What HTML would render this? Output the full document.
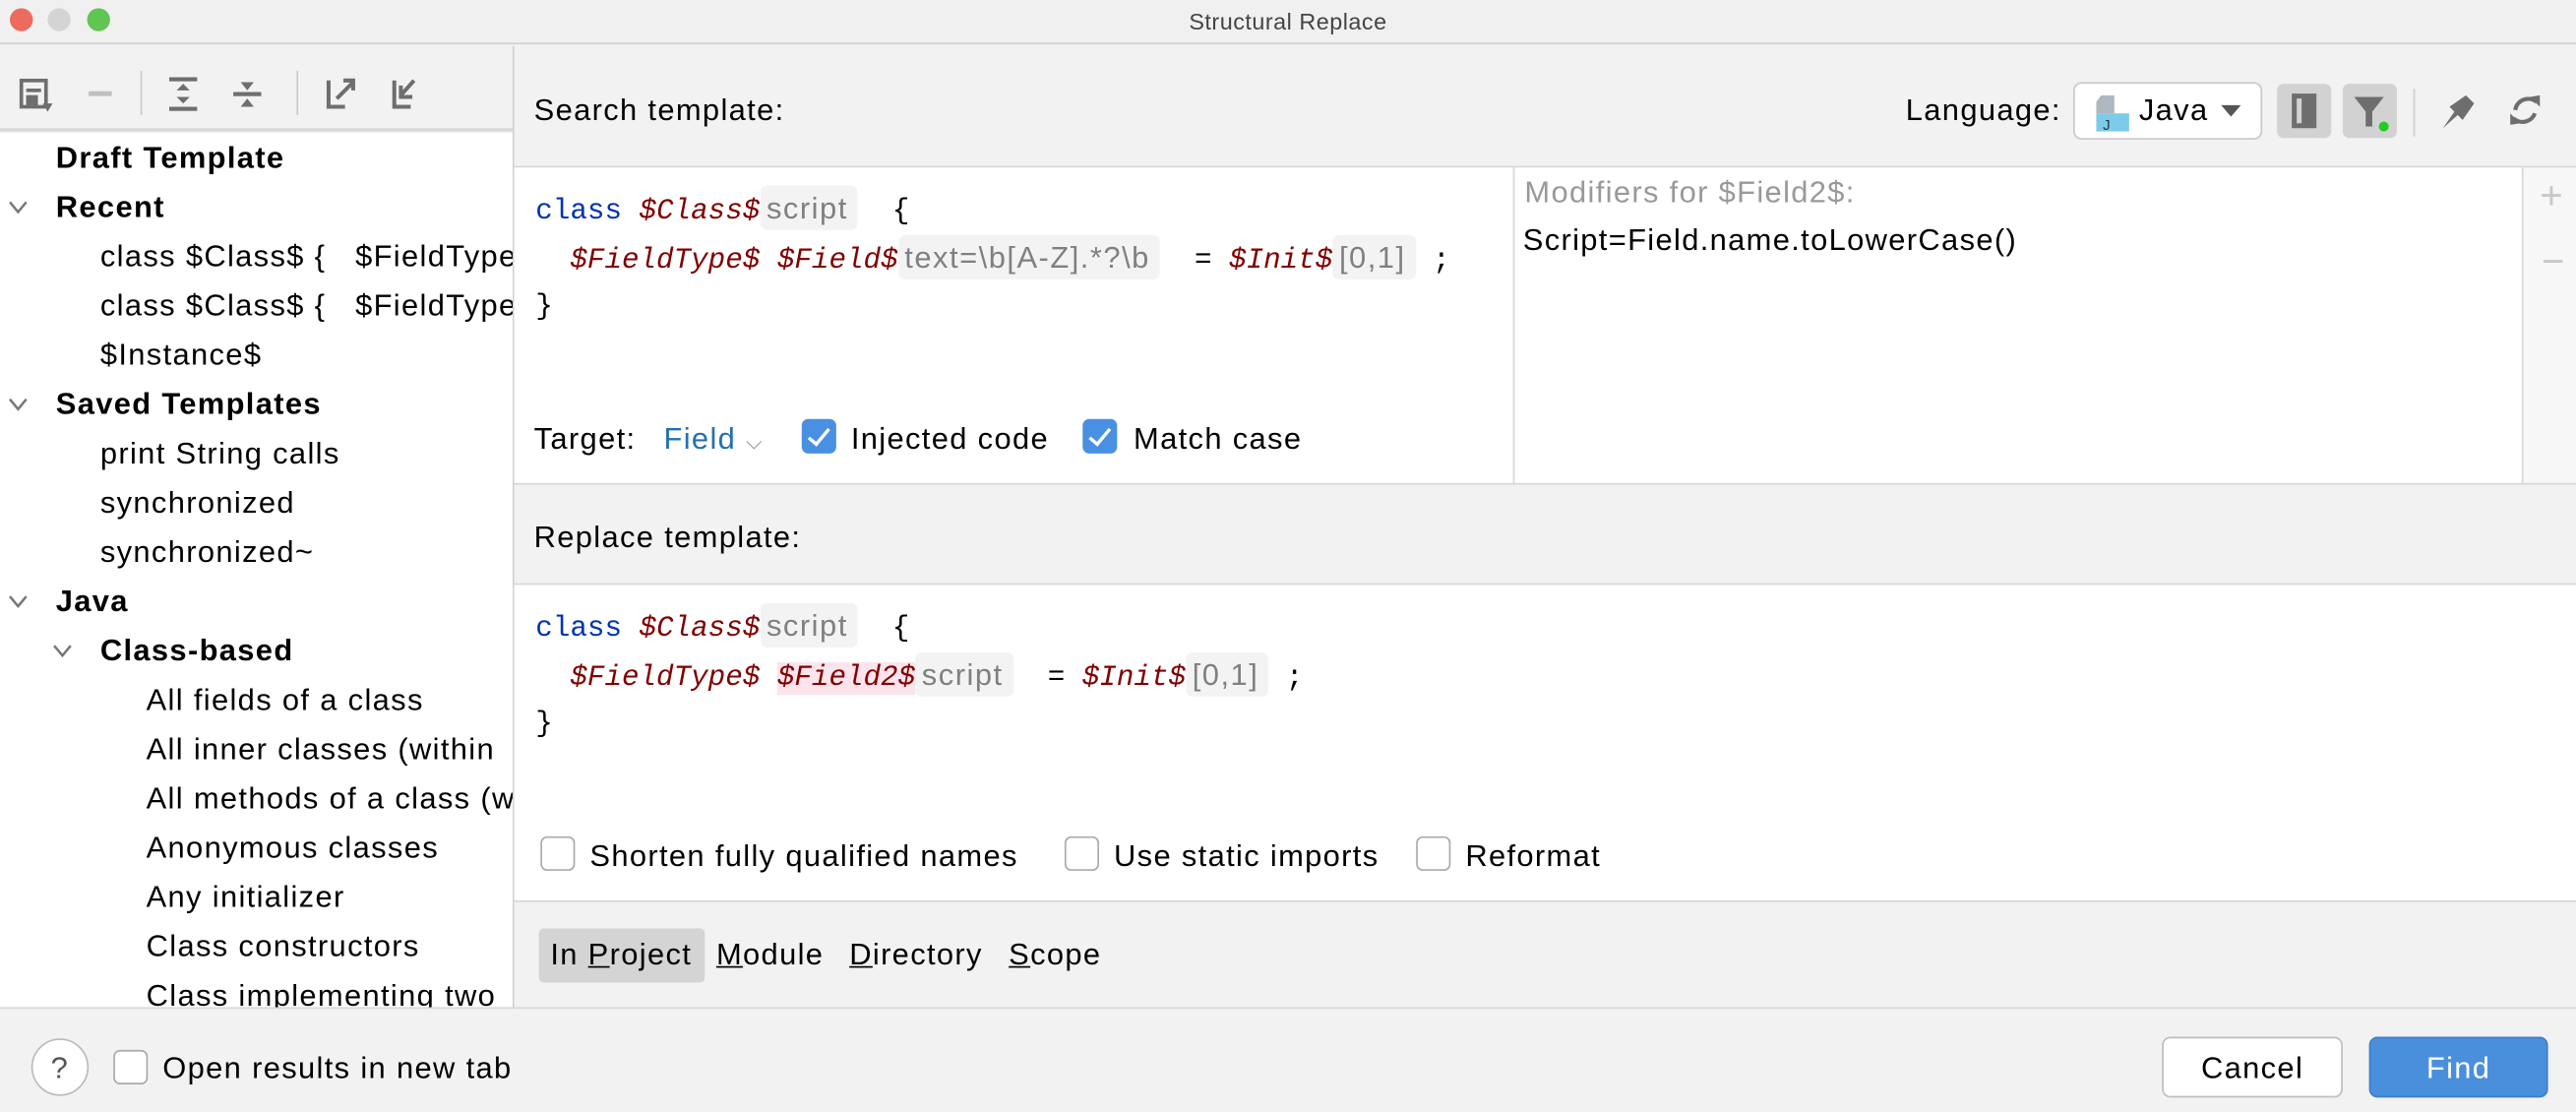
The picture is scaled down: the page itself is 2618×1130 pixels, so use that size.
<!DOCTYPE html>
<html><head><meta charset="utf-8"><style>
*{margin:0;padding:0;box-sizing:border-box}
html,body{width:2618px;height:1130px;overflow:hidden;background:#f2f2f2}
#w{position:absolute;left:0;top:0;width:1568px;height:677px;transform:scale(1.66964);transform-origin:0 0;font-family:"Liberation Sans",sans-serif;font-size:18.5px;letter-spacing:0.8px;color:#000;background:#f2f2f2}
.a{position:absolute}
.t{position:absolute;white-space:nowrap;line-height:20px}
.m{font-family:"Liberation Mono",monospace;font-size:17.5px;letter-spacing:0}
.kw{color:#0033b3}.var{color:#800000;font-style:italic}
.tag{background:#f3f3f3;color:#808080;border-radius:4px;padding:3px 6px 3px 4px;font-family:"Liberation Sans",sans-serif;font-size:18.5px;letter-spacing:0.9px}
.cb{position:absolute;width:21px;height:21px;border:1px solid #aaa;border-radius:4px;background:#fff}
.cbc{position:absolute;width:21px;height:21px;border-radius:4px;background:#4a90e2}
.cbc:after{content:"";position:absolute;left:7px;top:3px;width:5px;height:11px;border:solid #fff;border-width:0 2.5px 2.5px 0;transform:rotate(40deg)}
</style></head><body><div id="w">
<div class="a" style="left:0;top:0;width:1568px;height:27px;background:#f0f0f0;border-bottom:1px solid #d0d0d0"></div>
<div class="a" style="left:6px;top:5px;width:14px;height:14px;border-radius:7px;background:#ed6a5e"></div>
<div class="a" style="left:29px;top:5px;width:14px;height:14px;border-radius:7px;background:#d4d4d4"></div>
<div class="a" style="left:53px;top:5px;width:14px;height:14px;border-radius:7px;background:#61c554"></div>
<div class="t" style="left:0;width:1568px;text-align:center;top:3px;font-size:14px;letter-spacing:0.3px;color:#444">Structural Replace</div>
<div class="a" style="left:0;top:28px;width:312px;height:52px;background:#f2f2f2;border-bottom:2px solid #d8d8d8"></div>
<svg class="a" style="left:0;top:28px" width="312" height="52">
<g fill="none" stroke="#6e6e6e" stroke-width="2.2">
<rect x="13" y="21" width="15" height="16"/><rect x="17" y="31" width="5" height="4" fill="#6e6e6e"/>
<line x1="16" y1="27" x2="25" y2="27"/>
</g><path d="M26 35 l6 0 l-3 5z" fill="#6e6e6e"/>
<line x1="54" y1="29" x2="68" y2="29" stroke="#c0c0c0" stroke-width="3"/>
<line x1="86" y1="15" x2="86" y2="42" stroke="#ccc"/>
<line x1="181" y1="15" x2="181" y2="42" stroke="#ccc"/>
<g fill="#6e6e6e"><rect x="103" y="19" width="17" height="2.5"/><rect x="103" y="37" width="17" height="2.5"/>
<path d="M111.5 23 l4 4 h-8z M111.5 35 l4 -4 h-8z"/>
<rect x="142" y="28" width="17" height="2.5"/><path d="M150.5 27 l4 -5 h-8z M150.5 32 l4 5 h-8z"/></g>
<g fill="none" stroke="#6e6e6e" stroke-width="2.4"><path d="M200 21 v16 h10 M205 32 l10 -10 M209 21 h6 v6"/>
<path d="M240 21 v16 h10 M252 21 l-8 9 M244 24 v7 h7"/></g>
</svg>
<div class="a" style="left:312px;top:28px;width:1px;height:585px;background:#d0d0d0"></div>
<div class="a" style="left:0;top:81px;width:312px;height:532px;background:#fff;overflow:hidden">
<svg class="a" style="left:0;top:0" width="60" height="340"><g fill="none" stroke="#777" stroke-width="1.5">
<path d="M6 42 l5 6 l5 -6"/><path d="M6 162 l5 6 l5 -6"/><path d="M6 282 l5 6 l5 -6"/><path d="M33 312 l5 6 l5 -6"/></g></svg>
<div style="position:absolute;left:0;top:0px;line-height:30px;white-space:nowrap">
<div style="padding-left:34px;font-weight:bold">Draft Template</div>
<div style="padding-left:34px;font-weight:bold">Recent</div>
<div style="padding-left:61px">class $Class$ {&nbsp;&nbsp; $FieldType$</div>
<div style="padding-left:61px">class $Class$ {&nbsp;&nbsp; $FieldType$</div>
<div style="padding-left:61px">$Instance$</div>
<div style="padding-left:34px;font-weight:bold">Saved Templates</div>
<div style="padding-left:61px">print String calls</div>
<div style="padding-left:61px">synchronized</div>
<div style="padding-left:61px">synchronized~</div>
<div style="padding-left:34px;font-weight:bold">Java</div>
<div style="padding-left:61px;font-weight:bold">Class-based</div>
<div style="padding-left:89px">All fields of a class</div>
<div style="padding-left:89px">All inner classes (within</div>
<div style="padding-left:89px">All methods of a class (w</div>
<div style="padding-left:89px">Anonymous classes</div>
<div style="padding-left:89px">Any initializer</div>
<div style="padding-left:89px">Class constructors</div>
<div style="padding-left:89px">Class implementing two</div>
</div></div>
<div class="t" style="left:325px;top:57px">Search template:</div>
<div class="t" style="left:1160px;top:57px">Language:</div>
<div class="a" style="left:1262px;top:50px;width:115px;height:35px;background:#fff;border:1px solid #c8c8c8;border-radius:5px"></div>
<svg class="a" style="left:1272px;top:56px" width="100" height="26"><path d="M7 2 h8 v11 h-11 v-7z" fill="#b0b8bf"/><rect x="4" y="13" width="20" height="11" fill="#7ccbea"/><text x="8" y="23" font-size="9" font-family="Liberation Sans" fill="#333">J</text>
<path d="M80 8 h12 l-6 7z" fill="#555"/></svg>
<div class="t" style="left:1302px;top:57px">Java</div>
<div class="a" style="left:1386px;top:51px;width:33px;height:33px;background:#d2d2d2;border-radius:4px"></div>
<div class="a" style="left:1395px;top:57px;width:15px;height:21px;border:3px solid #6e6e6e;border-right-width:9px"></div>
<div class="a" style="left:1426px;top:51px;width:33px;height:33px;background:#d2d2d2;border-radius:4px"></div>
<svg class="a" style="left:1426px;top:51px" width="33" height="33"><path d="M7 8 h18 l-7 9 v9 h-4 v-9z" fill="#6e6e6e"/><circle cx="25" cy="26" r="3" fill="#22cc22"/></svg>
<div class="a" style="left:1469px;top:54px;width:1px;height:29px;background:#ccc"></div>
<svg class="a" style="left:1480px;top:53px" width="80" height="30"><path d="M7 25 l7 -10 l-3 -3 l10 -7 l5 5 l-7 10 l-3 -3z" fill="#6e6e6e"/>
<path d="M64 9 a8 8 0 0 0 -13 5 M50 19 a8 8 0 0 0 13 -3" fill="none" stroke="#6e6e6e" stroke-width="2.5"/><path d="M60 6 l6 -1 l0 7z M54 22 l-6 1 l0 -7z" fill="#6e6e6e"/></svg>
<div class="a" style="left:313px;top:101px;width:1255px;height:1px;background:#d6d6d6"></div>
<div class="a" style="left:313px;top:102px;width:608px;height:192px;background:#fff"></div>
<div class="a" style="left:921px;top:102px;width:1px;height:192px;background:#d6d6d6"></div>
<div class="a" style="left:922px;top:102px;width:613px;height:192px;background:#fff"></div>
<div class="a" style="left:1535px;top:102px;width:1px;height:192px;background:#d6d6d6"></div>
<div class="a" style="left:1536px;top:102px;width:32px;height:192px;background:#f7f7f7"></div>
<div class="t" style="left:1546px;top:110px;font-size:24px;color:#c8c8c8">+</div>
<div class="t" style="left:1547px;top:150px;font-size:24px;color:#c8c8c8">−</div>
<div class="t" style="left:928px;top:107px;color:#999">Modifiers for $Field2$:</div>
<div class="t" style="left:927px;top:136px">Script=Field.name.toLowerCase()</div>
<div class="t m" style="left:326px;top:117px"><span class="kw">class</span> <span class="var">$Class$</span><span class="tag">script</span> &nbsp;{</div>
<div class="t m" style="left:326px;top:147px">&nbsp;&nbsp;<span class="var">$FieldType$</span> <span class="var">$Field$</span><span class="tag">text=\b[A-Z].*?\b</span> &nbsp;= <span class="var">$Init$</span><span class="tag">[0,1]</span> ;</div>
<div class="t m" style="left:326px;top:177px">}</div>
<div class="t" style="left:325px;top:257px">Target:</div>
<div class="t" style="left:404px;top:257px;color:#2470b3">Field <span style="color:#888;font-size:13px">⌵</span></div>
<div class="cbc" style="left:488px;top:255px"></div>
<div class="t" style="left:518px;top:257px">Injected code</div>
<div class="cbc" style="left:659px;top:255px"></div>
<div class="t" style="left:690px;top:257px">Match case</div>
<div class="a" style="left:313px;top:294px;width:1255px;height:1px;background:#d6d6d6"></div>
<div class="t" style="left:325px;top:317px">Replace template:</div>
<div class="a" style="left:313px;top:355px;width:1255px;height:1px;background:#d6d6d6"></div>
<div class="a" style="left:313px;top:356px;width:1255px;height:192px;background:#fff"></div>
<div class="t m" style="left:326px;top:371px"><span class="kw">class</span> <span class="var">$Class$</span><span class="tag">script</span> &nbsp;{</div>
<div class="t m" style="left:326px;top:401px">&nbsp;&nbsp;<span class="var">$FieldType$</span> <span class="var" style="background:#fce4ec">$Field2$</span><span class="tag">script</span> &nbsp;= <span class="var">$Init$</span><span class="tag">[0,1]</span> ;</div>
<div class="t m" style="left:326px;top:431px">}</div>
<div class="cb" style="left:329px;top:509px"></div><div class="t" style="left:359px;top:511px">Shorten fully qualified names</div>
<div class="cb" style="left:648px;top:509px"></div><div class="t" style="left:678px;top:511px">Use static imports</div>
<div class="cb" style="left:862px;top:509px"></div><div class="t" style="left:892px;top:511px">Reformat</div>
<div class="a" style="left:313px;top:548px;width:1255px;height:1px;background:#d6d6d6"></div>
<div class="a" style="left:328px;top:565px;width:101px;height:33px;background:#d4d4d4;border-radius:3px"></div>
<div class="t" style="left:335px;top:571px">In <u>P</u>roject</div>
<div class="t" style="left:436px;top:571px"><u>M</u>odule</div>
<div class="t" style="left:517px;top:571px"><u>D</u>irectory</div>
<div class="t" style="left:614px;top:571px"><u>S</u>cope</div>
<div class="a" style="left:0;top:613px;width:1568px;height:1px;background:#d6d6d6"></div>
<div class="a" style="left:19px;top:632px;width:35px;height:35px;border-radius:18px;border:1px solid #bbb;background:#fff"></div>
<div class="t" style="left:19px;top:640px;width:35px;text-align:center;color:#555">?</div>
<div class="cb" style="left:69px;top:639px"></div>
<div class="t" style="left:99px;top:640px">Open results in new tab</div>
<div class="a" style="left:1316px;top:631px;width:110px;height:37px;background:#fff;border:1px solid #bdbdbd;border-radius:5px"></div>
<div class="t" style="left:1316px;top:640px;width:110px;text-align:center">Cancel</div>
<div class="a" style="left:1442px;top:631px;width:109px;height:37px;background:#4a8fdc;border:1px solid #3d7ec8;border-radius:5px"></div>
<div class="t" style="left:1442px;top:640px;width:109px;text-align:center;color:#fff">Find</div>
</div></body></html>
